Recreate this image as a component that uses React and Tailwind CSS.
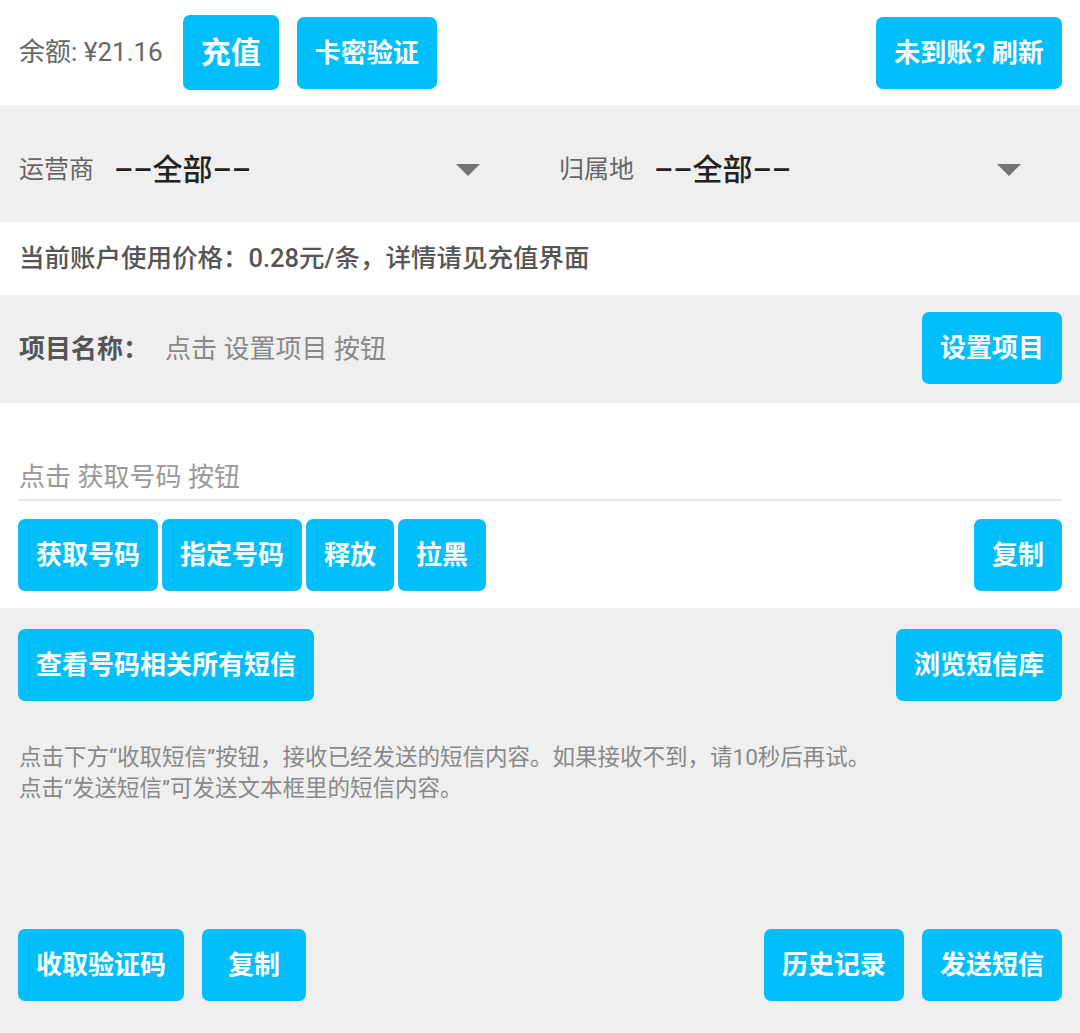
import React from "react";

const font = { fontFamily: 'Roboto, "Noto Sans CJK SC", "Noto Sans", sans-serif' };

function Btn({ w, h = "h-[72px]", size = "text-[26px]", children, className = "" }) {
  return (
    <button
      className={`${w} ${h} ${size} ${className} shrink-0 rounded-[7px] bg-[#02befa] text-white font-bold flex items-center justify-center leading-none`}
    >
      {children}
    </button>
  );
}

function Arrow() {
  return (
    <svg width="24" height="12" viewBox="0 0 24 12" className="shrink-0">
      <polygon points="0,0 24,0 12,12" fill="#747474" />
    </svg>
  );
}

export default function App() {
  return (
    <div style={font} className="w-[1080px] h-[1033px] bg-[#efefef] flex flex-col overflow-hidden">
      {/* balance row */}
      <div className="h-[105px] bg-white flex items-center pl-[19px] pr-[18px]">
        <span className="text-[26px] text-[#666] mr-[20px]">余额: ¥21.16</span>
        <Btn w="w-[96px]" h="h-[75px]" size="text-[30px]">充值</Btn>
        <Btn w="w-[140px]" className="ml-[18px]">卡密验证</Btn>
        <Btn w="w-[186px]" className="ml-auto">未到账? 刷新</Btn>
      </div>

      {/* selects */}
      <div className="h-[117px] flex items-center pt-[12px]">
        <div className="w-[540px] flex items-center pl-[19px] pr-[60px]">
          <span className="text-[25px] text-[#666]">运营商</span>
          <span className="text-[30px] text-[#222] font-medium ml-[20px] leading-none">––全部––</span>
          <div className="ml-auto"><Arrow /></div>
        </div>
        <div className="w-[540px] flex items-center pl-[19px] pr-[59px]">
          <span className="text-[25px] text-[#666]">归属地</span>
          <span className="text-[30px] text-[#222] font-medium ml-[20px] leading-none">––全部––</span>
          <div className="ml-auto"><Arrow /></div>
        </div>
      </div>

      {/* price */}
      <div className="h-[73px] bg-white flex items-center pl-[19px]">
        <span className="text-[25.5px] text-[#555] font-medium">当前账户使用价格：0.28元/条，详情请见充值界面</span>
      </div>

      {/* project */}
      <div className="h-[108px] flex items-center pl-[19px] pr-[18px]">
        <span className="text-[26px] text-[#555] font-bold">项目名称：</span>
        <span className="text-[26px] text-[#888] ml-[16px]">点击 设置项目 按钮</span>
        <Btn w="w-[140px]" className="ml-auto -mt-[3px]">设置项目</Btn>
      </div>

      {/* number */}
      <div className="h-[205px] bg-white flex flex-col px-[18px]">
        <div className="h-[98px] flex items-end border-b-2 border-[#e6e6e6] pl-[1px] pb-[2px]">
          <span className="text-[26px] text-[#999]">点击 获取号码 按钮</span>
        </div>
        <div className="flex items-center mt-[18px] gap-[4px]">
          <Btn w="w-[140px]">获取号码</Btn>
          <Btn w="w-[140px]">指定号码</Btn>
          <Btn w="w-[88px]">释放</Btn>
          <Btn w="w-[88px]">拉黑</Btn>
          <Btn w="w-[88px]" className="ml-auto">复制</Btn>
        </div>
      </div>

      {/* sms */}
      <div className="flex-1 flex flex-col px-[18px] pt-[21px]">
        <div className="flex items-center">
          <Btn w="w-[296px]">查看号码相关所有短信</Btn>
          <Btn w="w-[166px]" className="ml-auto">浏览短信库</Btn>
        </div>
        <div className="mt-[41px] pl-[1px] text-[22.5px] leading-[31px] text-[#888]">
          <div>点击下方“收取短信”按钮，接收已经发送的短信内容。如果接收不到，请10秒后再试。</div>
          <div>点击“发送短信”可发送文本框里的短信内容。</div>
        </div>
        <div className="flex items-center mt-auto mb-[32px]">
          <Btn w="w-[166px]">收取验证码</Btn>
          <Btn w="w-[104px]" className="ml-[18px]">复制</Btn>
          <Btn w="w-[140px]" className="ml-auto">历史记录</Btn>
          <Btn w="w-[140px]" className="ml-[18px]">发送短信</Btn>
        </div>
      </div>
    </div>
  );
}
